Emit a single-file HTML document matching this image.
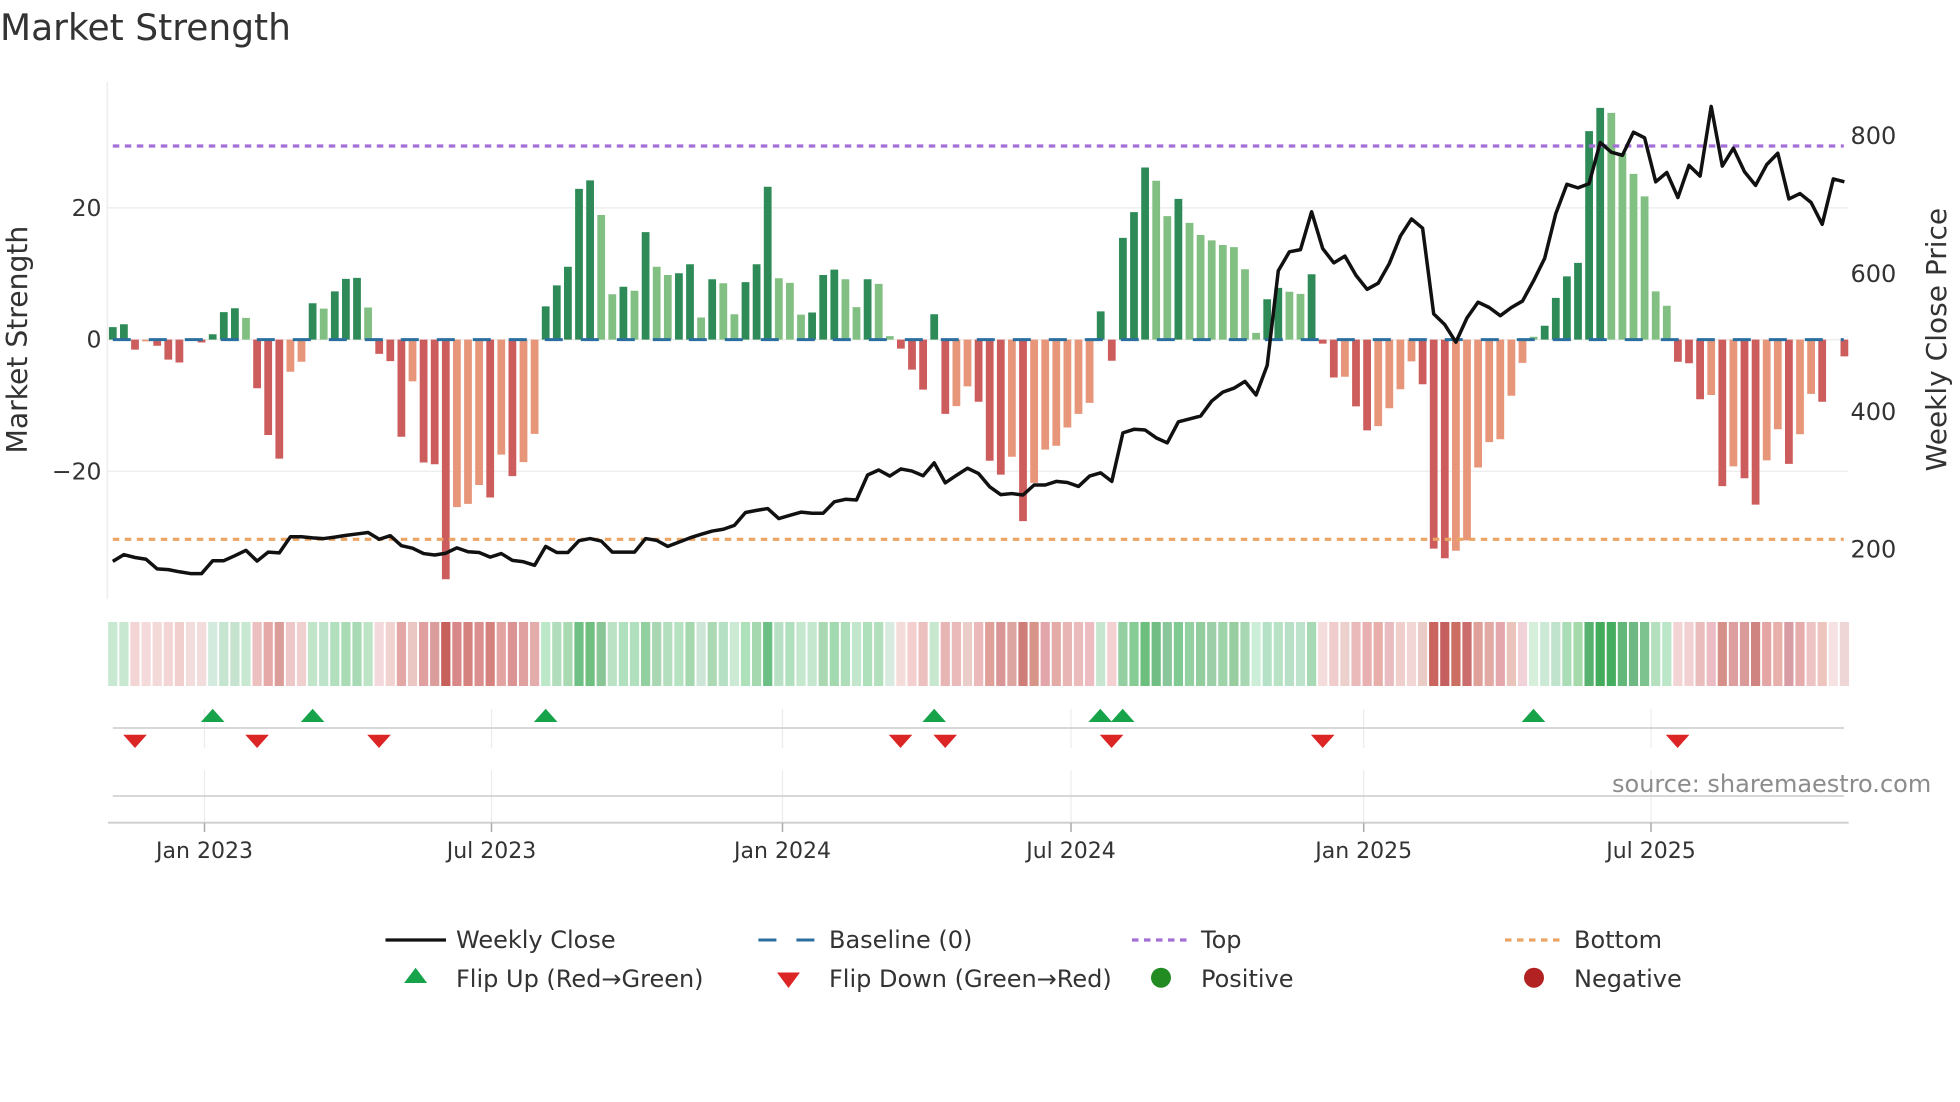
<!DOCTYPE html>
<html><head><meta charset="utf-8"><title>Market Strength</title>
<style>html,body{margin:0;padding:0;background:#fff}svg{display:block}text{font-family:"DejaVu Sans","Liberation Sans",sans-serif;fill:#333}</style></head>
<body>
<svg width="1960" height="1102" viewBox="0 0 1960 1102" xmlns="http://www.w3.org/2000/svg">
<rect width="1960" height="1102" fill="#fff"/>
<text x="0" y="40" font-size="36.5" textLength="291" lengthAdjust="spacingAndGlyphs">Market Strength</text>
<g stroke="#eeeeee" stroke-width="1.5" fill="none">
<path d="M107.3 82V599M107 207.9H1848M107 471.4H1848M107 339.6H1848"/>
</g>
<g transform="translate(112.8,60) scale(11.1,.35714)" fill="none" stroke-width=".7">
<path stroke="#2e8b57" d="M0 783V748M1 783V740M9 783V768M10 783V706M11 783V695M18 783V681M20 783V648M21 783V613M22 783V610M39 783V690M40 783V631M41 783V579M42 783V361M43 783V337M46 783V635M48 783V482M51 783V597M52 783V572M54 783V614M57 783V622M58 783V572M59 783V355M63 783V707M64 783V602M65 783V587M68 783V614M74 783V712M89 783V704M91 783V498M92 783V426M93 783V301M96 783V389M104 783V670M105 783V638M108 783V600M129 783V744M130 783V666M131 783V606M132 783V568M133 783V199M134 783V134"/>
<path stroke="#82bf82" d="M12 783V722M19 783V696M23 783V693M44 783V434M45 783V656M47 783V646M49 783V579M50 783V602M53 783V721M55 783V625M56 783V712M60 783V611M61 783V624M62 783V713M66 783V614M67 783V692M69 783V627M70 783V773M94 783V338M95 783V437M97 783V456M98 783V490M99 783V505M100 783V518M101 783V524M102 783V586M103 783V764M106 783V649M107 783V655M128 783V775M135 783V148M136 783V260M137 783V319M138 783V382M139 783V648M140 783V688"/>
<path stroke="#cd5c5c" d="M2 783V811M4 783V800M5 783V839M6 783V847M8 783V791M13 783V919M14 783V1050M15 783V1116M24 783V823M25 783V843M26 783V1055M28 783V1127M29 783V1132M30 783V1454M34 783V1225M36 783V1165M71 783V808M72 783V867M73 783V923M75 783V991M78 783V957M79 783V1122M80 783V1161M82 783V1291M90 783V842M109 783V794M110 783V889M112 783V970M113 783V1037M118 783V908M119 783V1368M120 783V1395M141 783V845M142 783V849M143 783V950M145 783V1193M147 783V1171M148 783V1245M151 783V1131M154 783V957M156 783V830"/>
<path stroke="#e8967a" d="M3 783V788M16 783V873M17 783V845M27 783V900M31 783V1252M32 783V1243M33 783V1190M35 783V1105M37 783V1126M38 783V1047M76 783V969M77 783V914M81 783V1111M83 783V1184M84 783V1091M85 783V1080M86 783V1029M87 783V991M88 783V960M111 783V887M114 783V1025M115 783V975M116 783V922M117 783V844M121 783V1374M122 783V1345M123 783V1141M124 783V1070M125 783V1062M126 783V940M127 783V848M144 783V938M146 783V1138M149 783V1121M150 783V1034M152 783V1048M153 783V935"/>
</g>
<path d="M112.8 339.6H1843.8" stroke="#2b6f9f" stroke-width="3" stroke-dasharray="18 18" fill="none"/>
<path d="M112.8 146H1843.8" stroke="#a56fd8" stroke-width="3.2" stroke-dasharray="6.5 5.5" fill="none"/>
<path d="M112.8 539.3H1843.8" stroke="#eba464" stroke-width="3.2" stroke-dasharray="6.5 5.5" fill="none"/>
<g transform="translate(112.8,60) scale(11.1,.35714)">
<polyline fill="none" stroke="#111" stroke-width="3.5" stroke-linejoin="round" vector-effect="non-scaling-stroke" points="0,1404 1,1385 2,1393 3,1398 4,1425 5,1427 6,1433 7,1438 8,1438 9,1402 10,1402 11,1388 12,1373 13,1403 14,1378 15,1380 16,1335 17,1335 18,1338 19,1340 20,1336 21,1331 22,1327 23,1323 24,1342 25,1332 26,1360 27,1367 28,1382 29,1386 30,1381 31,1366 32,1377 33,1379 34,1392 35,1382 36,1401 37,1405 38,1415 39,1362 40,1379 41,1379 42,1346 43,1340 44,1347 45,1378 46,1378 47,1378 48,1340 49,1345 50,1362 51,1350 52,1338 53,1328 54,1319 55,1314 56,1303 57,1267 58,1261 59,1256 60,1284 61,1275 62,1266 63,1269 64,1269 65,1237 66,1230 67,1232 68,1162 69,1148 70,1165 71,1145 72,1151 73,1164 74,1128 75,1184 76,1163 77,1143 78,1158 79,1195 80,1217 81,1214 82,1218 83,1190 84,1190 85,1180 86,1183 87,1194 88,1165 89,1156 90,1180 91,1044 92,1034 93,1036 94,1058 95,1072 96,1013 97,1005 98,997 99,955 100,930 101,919 102,900 103,938 104,855 105,590 106,537 107,531 108,425 109,528 110,568 111,549 112,603 113,642 114,625 115,570 116,493 117,445 118,471 119,711 120,741 121,790 122,722 123,678 124,693 125,716 126,693 127,675 128,618 129,555 130,430 131,348 132,358 133,346 134,231 135,258 136,267 137,202 138,218 139,341 140,315 141,385 142,295 143,325 144,130 145,297 146,247 147,313 148,351 149,293 150,261 151,389 152,374 153,399 154,460 155,333 156,341"/>
</g>
<g font-size="23.5">
<text x="101.5" y="216" text-anchor="end">20</text>
<text x="101.5" y="347.5" text-anchor="end">0</text>
<text x="101.5" y="479.6" text-anchor="end">−20</text>
</g>
<g font-size="24">
<text x="1850.5" y="144">800</text>
<text x="1850.5" y="282">600</text>
<text x="1850.5" y="420">400</text>
<text x="1850.5" y="557.5">200</text>
</g>
<text transform="translate(27,339.6) rotate(-90)" font-size="28.2" text-anchor="middle">Market Strength</text>
<text transform="translate(1946,339.6) rotate(-90)" font-size="28" text-anchor="middle">Weekly Close Price</text>
<g transform="translate(112.8,622) scale(11.1,64)" fill="none" stroke-width=".83">
<path stroke="#c8e8d2" d="M0 0v1"/><path stroke="#c8e8d2" d="M1 0v1"/><path stroke="#f2d5d4" d="M2 0v1"/><path stroke="#f5dadb" d="M3 0v1"/><path stroke="#f3dad9" d="M4 0v1"/><path stroke="#f2d5d4" d="M5 0v1"/><path stroke="#f0cfcd" d="M6 0v1"/><path stroke="#f3dcdc" d="M7 0v1"/><path stroke="#f3dcdc" d="M8 0v1"/><path stroke="#d3ebdf" d="M9 0v1"/><path stroke="#c5e5d0" d="M10 0v1"/><path stroke="#c5e3cf" d="M11 0v1"/><path stroke="#c8e8d2" d="M12 0v1"/><path stroke="#ecc0bf" d="M13 0v1"/><path stroke="#e5a9a7" d="M14 0v1"/><path stroke="#da9d99" d="M15 0v1"/><path stroke="#eec8c8" d="M16 0v1"/><path stroke="#f0cfcf" d="M17 0v1"/><path stroke="#c0e5c9" d="M18 0v1"/><path stroke="#bee3cb" d="M19 0v1"/><path stroke="#b2e0bf" d="M20 0v1"/><path stroke="#a9dbb5" d="M21 0v1"/><path stroke="#a9dab6" d="M22 0v1"/><path stroke="#bde5c5" d="M23 0v1"/><path stroke="#f3d8dc" d="M24 0v1"/><path stroke="#f0d2d0" d="M25 0v1"/><path stroke="#e3a8a6" d="M26 0v1"/><path stroke="#eac7c3" d="M27 0v1"/><path stroke="#e0a0a0" d="M28 0v1"/><path stroke="#db9d9c" d="M29 0v1"/><path stroke="#c6605a" d="M30 0v1"/><path stroke="#d9888a" d="M31 0v1"/><path stroke="#d5827f" d="M32 0v1"/><path stroke="#dc8f8f" d="M33 0v1"/><path stroke="#d5827e" d="M34 0v1"/><path stroke="#e2a3a1" d="M35 0v1"/><path stroke="#dc9393" d="M36 0v1"/><path stroke="#e0a0a0" d="M37 0v1"/><path stroke="#e4acab" d="M38 0v1"/><path stroke="#bde8c8" d="M39 0v1"/><path stroke="#b2ddbd" d="M40 0v1"/><path stroke="#a8d9b1" d="M41 0v1"/><path stroke="#6fc084" d="M42 0v1"/><path stroke="#6fbf80" d="M43 0v1"/><path stroke="#88c695" d="M44 0v1"/><path stroke="#bce2c6" d="M45 0v1"/><path stroke="#b1e0be" d="M46 0v1"/><path stroke="#b1e0be" d="M47 0v1"/><path stroke="#92d0a0" d="M48 0v1"/><path stroke="#a9d7b3" d="M49 0v1"/><path stroke="#b3dfbe" d="M50 0v1"/><path stroke="#b5e3c1" d="M51 0v1"/><path stroke="#a6d8b0" d="M52 0v1"/><path stroke="#cce5d6" d="M53 0v1"/><path stroke="#aad9b3" d="M54 0v1"/><path stroke="#b5e0c3" d="M55 0v1"/><path stroke="#cbe9d3" d="M56 0v1"/><path stroke="#aee0ba" d="M57 0v1"/><path stroke="#a5d8ae" d="M58 0v1"/><path stroke="#6dc085" d="M59 0v1"/><path stroke="#b8e0c5" d="M60 0v1"/><path stroke="#b0e0bd" d="M61 0v1"/><path stroke="#c4e7cd" d="M62 0v1"/><path stroke="#c4e7cd" d="M63 0v1"/><path stroke="#a9d8b3" d="M64 0v1"/><path stroke="#a3d9ae" d="M65 0v1"/><path stroke="#aedeb9" d="M66 0v1"/><path stroke="#c2e7cc" d="M67 0v1"/><path stroke="#aee0bb" d="M68 0v1"/><path stroke="#b2e0bd" d="M69 0v1"/><path stroke="#d8ebe0" d="M70 0v1"/><path stroke="#f4dcda" d="M71 0v1"/><path stroke="#f3cfd0" d="M72 0v1"/><path stroke="#edc0c0" d="M73 0v1"/><path stroke="#c7e8cf" d="M74 0v1"/><path stroke="#e8b5b5" d="M75 0v1"/><path stroke="#eababa" d="M76 0v1"/><path stroke="#eaccc8" d="M77 0v1"/><path stroke="#ecb9ba" d="M78 0v1"/><path stroke="#e0a09a" d="M79 0v1"/><path stroke="#da9696" d="M80 0v1"/><path stroke="#dda5a0" d="M81 0v1"/><path stroke="#cf7d78" d="M82 0v1"/><path stroke="#d79488" d="M83 0v1"/><path stroke="#e2a5aa" d="M84 0v1"/><path stroke="#e4aca6" d="M85 0v1"/><path stroke="#e8b4b4" d="M86 0v1"/><path stroke="#ebbbbb" d="M87 0v1"/><path stroke="#ecbcc0" d="M88 0v1"/><path stroke="#c6e6d0" d="M89 0v1"/><path stroke="#f3d0d2" d="M90 0v1"/><path stroke="#93cfa0" d="M91 0v1"/><path stroke="#87cc94" d="M92 0v1"/><path stroke="#6cbf7d" d="M93 0v1"/><path stroke="#72bd84" d="M94 0v1"/><path stroke="#8ac69b" d="M95 0v1"/><path stroke="#7fc992" d="M96 0v1"/><path stroke="#93d0a2" d="M97 0v1"/><path stroke="#92cd9e" d="M98 0v1"/><path stroke="#9ccfa8" d="M99 0v1"/><path stroke="#9fd4aa" d="M100 0v1"/><path stroke="#98ce9f" d="M101 0v1"/><path stroke="#a8d7b4" d="M102 0v1"/><path stroke="#cceed8" d="M103 0v1"/><path stroke="#b5e2c6" d="M104 0v1"/><path stroke="#b8e2c4" d="M105 0v1"/><path stroke="#b8e0c7" d="M106 0v1"/><path stroke="#bde3cc" d="M107 0v1"/><path stroke="#a7dab4" d="M108 0v1"/><path stroke="#f5dcdc" d="M109 0v1"/><path stroke="#f0cccc" d="M110 0v1"/><path stroke="#ecd0cc" d="M111 0v1"/><path stroke="#eababa" d="M112 0v1"/><path stroke="#e8b0b0" d="M113 0v1"/><path stroke="#e8aeaa" d="M114 0v1"/><path stroke="#e8bcc0" d="M115 0v1"/><path stroke="#efcecc" d="M116 0v1"/><path stroke="#f2d6d6" d="M117 0v1"/><path stroke="#eaccc6" d="M118 0v1"/><path stroke="#c9645f" d="M119 0v1"/><path stroke="#c66060" d="M120 0v1"/><path stroke="#cc6e62" d="M121 0v1"/><path stroke="#cb6d6d" d="M122 0v1"/><path stroke="#dfa09a" d="M123 0v1"/><path stroke="#e2a9a5" d="M124 0v1"/><path stroke="#e3a7ac" d="M125 0v1"/><path stroke="#e8c4ba" d="M126 0v1"/><path stroke="#f2d2d9" d="M127 0v1"/><path stroke="#d6efdb" d="M128 0v1"/><path stroke="#cce9d6" d="M129 0v1"/><path stroke="#bfe3cc" d="M130 0v1"/><path stroke="#aadcb5" d="M131 0v1"/><path stroke="#a5dbaa" d="M132 0v1"/><path stroke="#56b26e" d="M133 0v1"/><path stroke="#42ab5c" d="M134 0v1"/><path stroke="#45ad5f" d="M135 0v1"/><path stroke="#63b879" d="M136 0v1"/><path stroke="#6eb884" d="M137 0v1"/><path stroke="#7dc38f" d="M138 0v1"/><path stroke="#b5e0be" d="M139 0v1"/><path stroke="#bce6c8" d="M140 0v1"/><path stroke="#f2d4d4" d="M141 0v1"/><path stroke="#f0d0d0" d="M142 0v1"/><path stroke="#ebbcbc" d="M143 0v1"/><path stroke="#ecbcc4" d="M144 0v1"/><path stroke="#d6908a" d="M145 0v1"/><path stroke="#dc9e9e" d="M146 0v1"/><path stroke="#db9a9a" d="M147 0v1"/><path stroke="#d08482" d="M148 0v1"/><path stroke="#e4a5a4" d="M149 0v1"/><path stroke="#e8b0aa" d="M150 0v1"/><path stroke="#d89ca4" d="M151 0v1"/><path stroke="#e6abab" d="M152 0v1"/><path stroke="#edc3c3" d="M153 0v1"/><path stroke="#edc4be" d="M154 0v1"/><path stroke="#f6e1e3" d="M155 0v1"/><path stroke="#eed6d6" d="M156 0v1"/>
</g>
<path d="M204.5 709V748M204.5 770V822M491.5 709V748M491.5 770V822M782.5 709V748M782.5 770V822M1071 709V748M1071 770V822M1363.7 709V748M1363.7 770V822M1651 709V748M1651 770V822" stroke="#e9ecef" stroke-width="1.2" fill="none"/>
<path d="M112.8 728H1844M112.8 796H1844" stroke="#d2d2d2" stroke-width="1.8" fill="none"/>
<path d="M108 822.7H1848.7" stroke="#cdcdcd" stroke-width="1.8" fill="none"/>
<path d="M204.5 823V832M491.5 823V832M782.5 823V832M1071 823V832M1363.7 823V832M1651 823V832" stroke="#aaa" stroke-width="1.5" fill="none"/>
<g fill="#16a34a">
<path d="M212.7 708.7l11.8 13.3h-23.6zM312.6 708.7l11.8 13.3h-23.6zM545.7 708.7l11.8 13.3h-23.6zM934.2 708.7l11.8 13.3h-23.6zM1100.3 708.7l11.8 13.3h-23.6zM1122.7 708.7l11.8 13.3h-23.6zM1533.5 708.7l11.8 13.3h-23.6z"/>
</g>
<g fill="#dc2626">
<path d="M135 748l-11.8-13.3h23.6zM257.1 748l-11.8-13.3h23.6zM379 748l-11.8-13.3h23.6zM900.5 748l-11.8-13.3h23.6zM945.2 748l-11.8-13.3h23.6zM1111.6 748l-11.8-13.3h23.6zM1322.7 748l-11.8-13.3h23.6zM1677.6 748l-11.8-13.3h23.6z"/>
</g>
<g font-size="22" text-anchor="middle">
<text x="204.5" y="858">Jan 2023</text>
<text x="491.5" y="858">Jul 2023</text>
<text x="782.5" y="858">Jan 2024</text>
<text x="1071" y="858">Jul 2024</text>
<text x="1363.7" y="858">Jan 2025</text>
<text x="1651" y="858">Jul 2025</text>
</g>
<text x="1612" y="792" font-size="24" style="fill:#8c8c8c">source: sharemaestro.com</text>
<path d="M385.5 940H446" stroke="#111" stroke-width="3.2"/>
<path d="M758.4 940H816" stroke="#2b6f9f" stroke-width="3" stroke-dasharray="18 20"/>
<path d="M1132 940H1187" stroke="#a56fd8" stroke-width="3.2" stroke-dasharray="6.5 5.5"/>
<path d="M1505 940H1560" stroke="#eba464" stroke-width="3.2" stroke-dasharray="6.5 5.5"/>
<path d="M415.6 967.7l11.5 15.3h-23z" fill="#16a34a"/>
<path d="M788.5 988l-11.5-15.5h23z" fill="#dc2626"/>
<circle cx="1161" cy="977.7" r="10" fill="#228b22"/>
<circle cx="1534" cy="977.7" r="10" fill="#b22222"/>
<g font-size="24">
<text x="456" y="948">Weekly Close</text>
<text x="829" y="948">Baseline (0)</text>
<text x="1201" y="948">Top</text>
<text x="1574" y="948">Bottom</text>
<text x="456" y="987">Flip Up (Red→Green)</text>
<text x="829" y="987">Flip Down (Green→Red)</text>
<text x="1201" y="987">Positive</text>
<text x="1574" y="987">Negative</text>
</g>
</svg>
</body></html>
